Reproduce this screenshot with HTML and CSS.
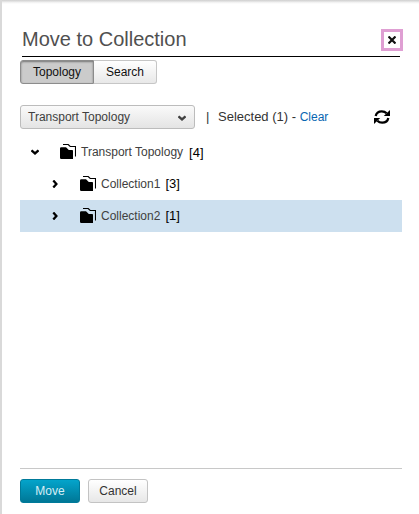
FILE: index.html
```html
<!DOCTYPE html>
<html lang="en">
<head>
<meta charset="utf-8">
<title>Move to Collection</title>
<link rel="stylesheet" href="styles.css">
</head>
<body>
<svg class="defs" width="0" height="0">
  <symbol id="folder" viewBox="0 0 16 16">
    <path d="M0 4.4Q0 3.3 1.2 3.3H6L8.8 6H12.2Q13 6 13 6.8V15H1.2Q0 15 0 13.8Z"/>
    <path d="M3 .5H8.2L10.2 2.5H15.5V12.5" fill="none" stroke="currentColor" stroke-width="1.1"/>
  </symbol>
  <symbol id="chevron" viewBox="0 0 8 8">
    <path d="M.5 2.3L4 5.4L7.5 2.3" fill="none" stroke="currentColor" stroke-width="2.3"/>
  </symbol>
</svg>
<main class="dialog">
  <header class="header">
    <h1>Move to Collection</h1>
    <button class="close" aria-label="Close"><svg width="8" height="8" viewBox="0 0 8 8"><path d="M.5 .5L7.5 7.5M7.5 .5L.5 7.5" stroke="currentColor" stroke-width="2.2"/></svg></button>
  </header>
  <nav class="tabs">
    <button class="tab active">Topology</button><button class="tab">Search</button>
  </nav>
  <div class="toolbar">
    <button class="select">Transport Topology<svg width="8" height="8"><use href="#chevron"/></svg></button>
    <span class="bar">|</span>
    <span class="selected">Selected (1) - <a>Clear</a></span>
    <svg class="refresh" width="16" height="14" viewBox="0 0 16 14">
      <path d="M1.7 6C2.3 2.9 4.8 1.3 7.8 1.3C9.8 1.3 11.4 2 12.6 3.3M14.3 8C13.7 11.1 11.2 12.7 8.2 12.7C6.2 12.7 4.6 12 3.4 10.7" fill="none" stroke="currentColor" stroke-width="2.3"/>
      <path d="M16 0V6H9.8ZM0 14V8H6.2Z"/>
    </svg>
  </div>
  <ul class="tree">
    <li class="row root"><svg class="arrow" width="8" height="8"><use href="#chevron"/></svg><svg class="folder" width="16" height="16"><use href="#folder"/></svg><span class="name">Transport Topology</span><span class="count">[4]</span></li>
    <li class="row child"><svg class="arrow closed" width="8" height="8"><use href="#chevron"/></svg><svg class="folder" width="16" height="16"><use href="#folder"/></svg><span class="name">Collection1</span><span class="count">[3]</span></li>
    <li class="row child current"><svg class="arrow closed" width="8" height="8"><use href="#chevron"/></svg><svg class="folder" width="16" height="16"><use href="#folder"/></svg><span class="name">Collection2</span><span class="count">[1]</span></li>
  </ul>
  <footer class="footer">
    <button class="btn primary">Move</button>
    <button class="btn">Cancel</button>
  </footer>
</main>
</body>
</html>
```
FILE: styles.css
```css
* { box-sizing: border-box; }
body { margin: 0; background: #fff; font: 12px/16px "Liberation Sans", Arial, sans-serif; color: #333; }
button { font: inherit; padding: 0; margin: 0; color: #333; }
svg { display: block; flex: none; fill: currentColor; }
.defs { position: absolute; }
.dialog {
  height: 514px;
  display: flex;
  flex-direction: column;
  padding: 29px 17px 11px 18px;
  border-left: 2px solid #d9d9d9;
  background: linear-gradient(#d2d2d2 0, #d9d9d9 1px, #eee 2px, #fff 4px);
}
.header {
  height: 28px;
  margin: 0 2px;
  display: flex;
  justify-content: space-between;
  border-bottom: 1px solid #000;
}
h1 { margin: 0; font-size: 20px; line-height: 20px; font-weight: 400; color: #505050; }
.close {
  width: 22px;
  height: 22px;
  margin-right: -3px;
  display: grid;
  place-items: center;
  background: #fff;
  border: 3px solid #df9fd3;
  color: #111;
}
.tabs { display: flex; height: 24px; margin-top: 3px; }
.tab {
  width: 63px;
  border: 1px solid #c6c6c6;
  border-left: 0;
  border-radius: 0 3px 3px 0;
  background: linear-gradient(#fff, #e8e8e8);
  color: #111;
}
.tab.active {
  width: 74px;
  border: 1px solid #8c8c8c;
  border-radius: 3px 0 0 3px;
  background: #cbcbcb;
  box-shadow: inset 0 1px 2px #777;
}
.toolbar { display: flex; align-items: center; height: 24px; margin-top: 21px; font-size: 13px; }
.select {
  width: 175px;
  height: 24px;
  display: flex;
  align-items: center;
  justify-content: space-between;
  padding: 0 8px 0 7px;
  border: 1px solid #bcbcbc;
  border-radius: 3px;
  background: linear-gradient(#fafafa, #e4e4e4);
  font-size: 12px;
  color: #404040;
}
.select svg { margin-top: 1px; }
.bar { width: 4px; margin-left: 11px; }
.selected { margin-left: 8px; white-space: pre; }
.selected a { font-size: 12px; color: #0867b2; }
.refresh { margin: 0 12px 0 auto; color: #000; }
.tree { list-style: none; margin: 7px 0 0; padding: 0; }
.row { display: flex; align-items: center; height: 32px; color: #000; }
.root { padding-left: 11px; }
.child { padding-left: 31px; }
.current { background: #cde0ef; }
.closed { transform: rotate(-90deg); }
.folder { margin: 0 5px 0 21px; }
.name { color: #404040; }
.count { margin-left: 5px; font-size: 13px; }
.root .count { margin-left: 6px; padding-top: 2px; }
.footer {
  display: flex;
  gap: 8px;
  height: 35px;
  margin-top: auto;
  padding-top: 10px;
  border-top: 1px solid #c8c8c8;
}
.btn {
  width: 60px;
  height: 24px;
  border: 1px solid #c3c3c3;
  border-radius: 3px;
  background: linear-gradient(#fff, #e7e7e7);
}
.primary { border-color: #007a9a; background: linear-gradient(#04a4cb, #007796); color: #d8eef5; }
```
